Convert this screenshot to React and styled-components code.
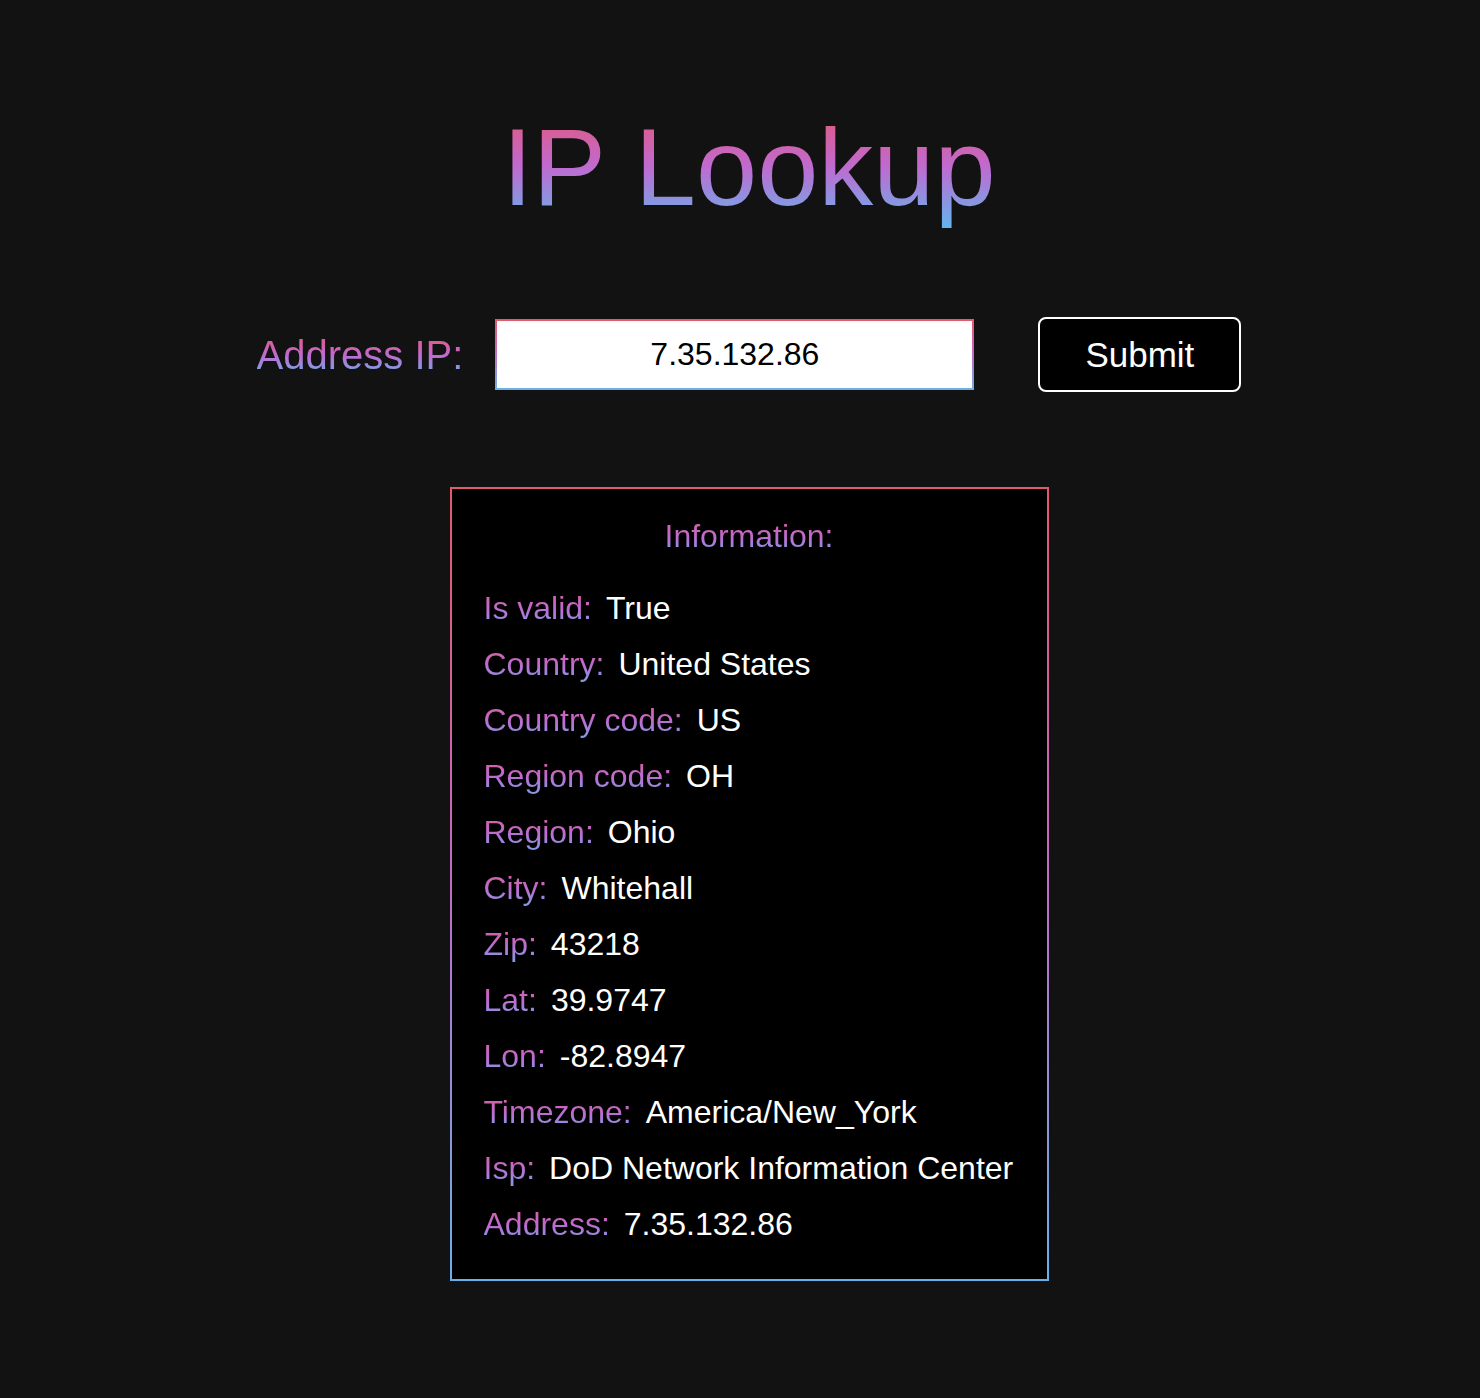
import React, { useState } from 'react'
import styled, { createGlobalStyle, css } from 'styled-components'

const GlobalStyle = createGlobalStyle`
  html, body {
    margin: 0;
    padding: 0;
    background: #121212;
  }
  body {
    font-family: "Liberation Sans", Arial, Helvetica, sans-serif;
    min-height: 1398px;
  }
`

const gradientText = css`
  background: linear-gradient(180deg, #e8576f 0%, #c06ad0 50%, #5fb8ef 100%);
  -webkit-background-clip: text;
  background-clip: text;
  color: transparent;
`

const gradientBorder = css`
  border: 2px solid;
  border-image: linear-gradient(180deg, #e4596b 0%, #c06cc8 50%, #6ab0e8 100%) 1;
`

const Page = styled.main`
  display: flex;
  flex-direction: column;
  align-items: center;
  padding: 103px 0 0 18px;
`

const Title = styled.h1`
  ${gradientText};
  margin: 0;
  font-size: 110px;
  font-weight: 400;
  line-height: 127px;
`

const Form = styled.form`
  display: flex;
  align-items: center;
  margin-top: 87px;
`

const Label = styled.label`
  ${gradientText};
  font-size: 40px;
  line-height: 46px;
  margin-right: 32px;
`

const Input = styled.input`
  ${gradientBorder};
  box-sizing: border-box;
  width: 479px;
  height: 71px;
  background: #fff;
  color: #000;
  font-family: inherit;
  font-size: 32px;
  text-align: center;
  outline: none;
  padding: 0;
`

const Button = styled.button`
  box-sizing: border-box;
  width: 203px;
  height: 75px;
  margin-left: 64px;
  background: #000;
  color: #fff;
  border: 2px solid #fff;
  border-radius: 8px;
  font-family: inherit;
  font-size: 35px;
  cursor: pointer;
`

const Card = styled.section`
  ${gradientBorder};
  box-sizing: border-box;
  width: 599px;
  margin-top: 95px;
  background: #000;
  padding: 19px 32px 27px;
`

const CardTitle = styled.h2`
  ${gradientText};
  margin: 0 auto 16px;
  width: fit-content;
  font-size: 32px;
  font-weight: 400;
  line-height: 56px;
  text-align: center;
`

const Row = styled.div`
  display: flex;
  gap: 14px;
  font-size: 32px;
  line-height: 56px;
  white-space: nowrap;
`

const Key = styled.span`
  ${gradientText};
`

const Value = styled.span`
  color: #fff;
`

const info = [
  ['Is valid', 'True'],
  ['Country', 'United States'],
  ['Country code', 'US'],
  ['Region code', 'OH'],
  ['Region', 'Ohio'],
  ['City', 'Whitehall'],
  ['Zip', '43218'],
  ['Lat', '39.9747'],
  ['Lon', '-82.8947'],
  ['Timezone', 'America/New_York'],
  ['Isp', 'DoD Network Information Center'],
  ['Address', '7.35.132.86'],
]

const App = () => {
  const [ip, setIp] = useState('7.35.132.86')
  return (
    <>
      <GlobalStyle />
      <Page>
        <Title>IP Lookup</Title>
        <Form onSubmit={e => e.preventDefault()}>
          <Label htmlFor="ip">Address IP:</Label>
          <Input id="ip" value={ip} onChange={e => setIp(e.target.value)} />
          <Button type="submit">Submit</Button>
        </Form>
        <Card>
          <CardTitle>Information:</CardTitle>
          {info.map(([k, v]) => (
            <Row key={k}>
              <Key>{k}:</Key>
              <Value>{v}</Value>
            </Row>
          ))}
        </Card>
      </Page>
    </>
  )
}

export default App
